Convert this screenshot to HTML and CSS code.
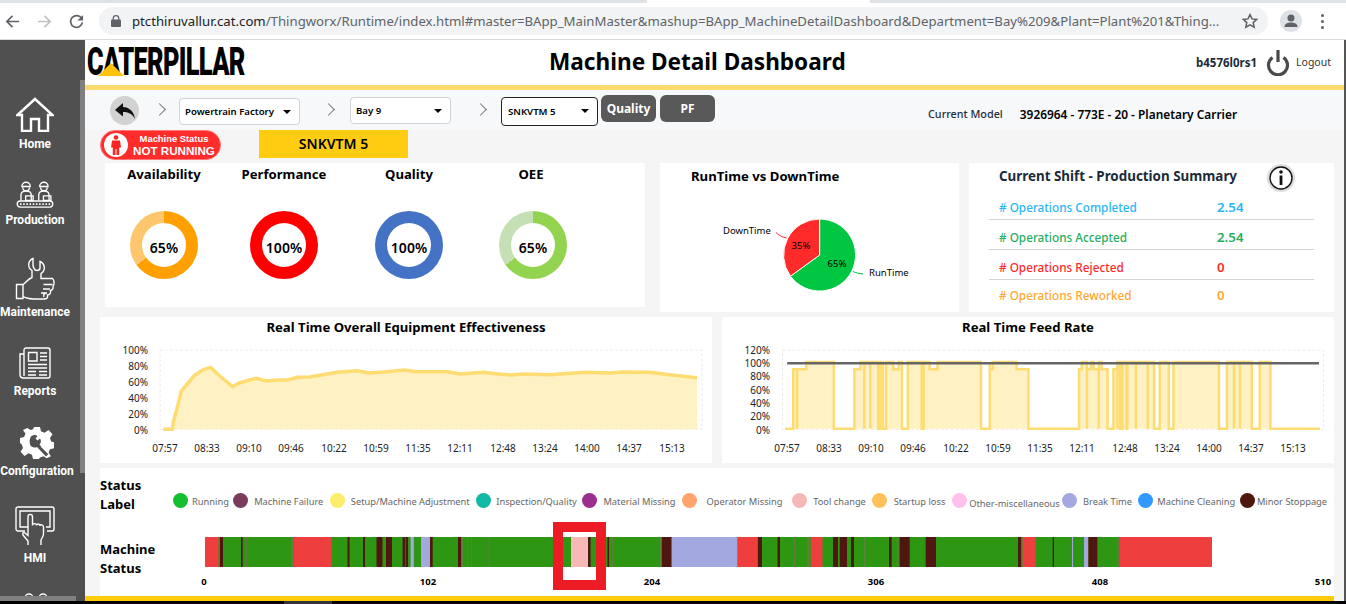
FILE: index.html
```html
<!DOCTYPE html>
<html lang="en">
<head>
    <meta charset="UTF-8">
    <title>Machine Detail Dashboard</title>
    <link rel="stylesheet" href="styles.css">
</head>
<body>
    <div class="browser-bar">
        <div class="tab-strip"><span class="tab-active"></span></div>
        <div class="browser-tools">
            <svg class="nav-icon" viewBox="0 0 16 16"><path d="M15 8H2M8 2 2 8l6 6" fill="none" stroke="#5f6368" stroke-width="1.8"/></svg>
            <svg class="nav-icon" viewBox="0 0 16 16"><path d="M1 8h13M8 2l6 6-6 6" fill="none" stroke="#bdc1c6" stroke-width="1.8"/></svg>
            <svg class="nav-icon" viewBox="0 0 16 16"><path d="M13.6 5A6.3 6.3 0 1 0 14.3 9" fill="none" stroke="#5f6368" stroke-width="1.8"/><path d="M15 1v6H9z" fill="#5f6368"/></svg>
            <div class="omnibox">
                <svg class="lock" viewBox="0 0 10 12"><path d="M2.2 5V3.4a2.8 2.8 0 0 1 5.6 0V5" fill="none" stroke="#5f6368" stroke-width="1.2"/><rect y="4.6" width="10" height="7.4" rx="1" fill="#5f6368"/></svg>
                <span class="url"><b>ptcthiruvallur.cat.com</b>/Thingworx/Runtime/index.html#master=BApp_MainMaster&amp;mashup=BApp_MachineDetailDashboard&amp;Department=Bay%209&amp;Plant=Plant%201&amp;Thing...</span>
                <svg class="star" viewBox="0 0 16 16"><path d="M8 1.6l2 4.3 4.7.5-3.5 3.2 1 4.6L8 11.9l-4.2 2.3 1-4.6L1.300 6.400 6 5.900z" fill="none" stroke="#5f6368" stroke-width="1.5"/></svg>
            </div>
            <div class="avatar">
                <svg viewBox="0 0 22 22"><circle cx="11" cy="8" r="3.500" fill="#5f6368"/><path d="M4.500 17c0-3.500 3.500-4.500 6.500-4.500s6.500 1 6.500 4.500z" fill="#5f6368"/></svg>
            </div>
            <div class="dots"><i></i><i></i><i></i></div>
        </div>
    </div>

    <div class="app">
        <nav class="sidebar">
            <a class="nav-item">
                <svg width="38" height="35" viewBox="0 0 38 35"><path d="M1.500 18 19 2l17.500 16H32v16h-9V22h-8v12H6V18z" class="line-icon"/></svg>
                <span>Home</span>
            </a>
            <a class="nav-item">
                <svg width="40" height="29" viewBox="0 0 40 31">
                    <g class="thin-icon">
                        <path d="M6 8a4.500 4.500 0 0 1 9 0zM25 8a4.500 4.500 0 0 1 9 0zM7 9a3.500 3.500 0 0 0 7 0M26 9a3.500 3.500 0 0 0 7 0"/>
                        <path d="M5 23v-6c0-3 2-4 5.500-4s5.500 1 5.500 4v6M24 23v-6c0-3 2-4 5.500-4s5.500 1 5.500 4v6"/>
                        <path d="M10 18h8v5h-8zM29 18h8v5h-8z"/>
                        <rect x="1" y="23.500" width="38" height="6.500" rx="3.200"/>
                    </g>
                    <path d="M4 26.800h33" stroke="#fff" stroke-width="2" stroke-dasharray="1.600 1.800"/>
                </svg>
                <span>Production</span>
            </a>
            <a class="nav-item nav-nudge">
                <svg width="40" height="44" viewBox="0 0 40 44"><path d="M18 2.500c-5 2-6 9-1 12v7c-4 1.500-6 5-9 7H1.500v14H8v-2c5 3 10 2.500 21 2.500 3 0 4-1.500 3.500-4 2.500 0 3.500-2 3-4.500 2.500-.5 3-3 2.500-4.500 1.500-1 1.500-6-.5-7.500H26v-5c5-3 4-10-1-12v6.500c0 1.500-1.500 2.500-3.500 2.500S18 10.500 18 9zM8 28.500v13M29 41c-1-2 0-4 3-4h-6M35 33h-7M37.500 28.500h-9" class="thin-icon"/></svg>
                <span>Maintenance</span>
            </a>
            <a class="nav-item">
                <svg width="32" height="32" viewBox="0 0 32 32"><g class="thin-icon"><path d="M5 3.500c0-1.500.8-2.500 2-2.500h22c1.200 0 2 1 2 2.500V29c0 1.500-1 2-2 2H4.500C2.500 31 1 29.500 1 27.500V7h4zM5 7v22"/><path d="M9.500 5.500h8.500v8.500H9.500zM21 6h7M21 9.500h7M21 13h7M9 17.500h19M9 21h19M9 24.500h8M20 24.500h8M9 28h8M20 28h8"/></g></svg>
                <span>Reports</span>
            </a>
            <a class="nav-item nav-nudge nav-config">
                <svg width="34" height="32" viewBox="0 0 34 32"><path d="M14 0h6l1 4.200 3.500 1.500L28.500 3l4 4.300-2.500 3.800 1.200 3.400 2.800.8v6l-4 1-1.500 3.300 2.400 3.600-4.100 2-3.300-2-3.500 1.300L19 32h-6l-1-4.200-3.500-1.500L4.500 29l-4-4.300L3 21l-1.200-3.400L0 16v-5l4-1 1.500-3.300L3 3.100 7.300 1l3.300 2 2.400-.8z" fill="#fff"/><path d="M11 9.500c2-2 5-2 6.500-.5l-2 2.500 2 2 2.500-2c1.500 2 1 4.500-.5 6l9 9.500-2.500 2.500-9-9.500c-2 1-4.500.5-6-1-1.500-2-2-6 0-9.500z" fill="#505050"/><path d="M21 19l7.500 7.500" stroke="#fff" stroke-width="1.200"/></svg>
                <span>Configuration</span>
            </a>
            <a class="nav-item">
                <svg width="40" height="40" viewBox="0 0 40 40"><g class="thin-icon"><path d="M10 25H3c-1.300 0-2-1-2-2V3c0-1.200.7-2 2-2h34c1.300 0 2 .8 2 2v20c0 1-.7 2-2 2h-5M13 21H5V5h30v16h-4"/><path d="M13 39v-4l-5-6c-1-2 .5-3 2-2l3 2.500V11c0-3.500 4.500-3.500 4.500 0v8.500c0-2.500 4-2.500 4 0 0-2 3.500-2 3.500.5 0-2 3.500-1.500 3.500 1v7c0 2-1.500 4-2.500 6v5"/></g></svg>
                <span>HMI</span>
            </a>
            <a class="nav-item">
                <svg width="40" height="40" viewBox="0 0 40 40"><g class="thin-icon"><circle cx="14" cy="5" r="4"/><circle cx="28" cy="5" r="4"/></g></svg>
            </a>
            <div class="side-thumb"></div>
            <div class="side-hscroll"></div>
        </nav>

        <div class="content">
            <header class="top-header">
                <div class="logo"><span class="logo-text">CATERPILLAR</span><span class="logo-tri"></span></div>
                <h1>Machine Detail Dashboard</h1>
                <div class="user-box">
                    <span class="user-name">b4576l0rs1</span>
                    <svg width="24" height="26" viewBox="0 0 24 26"><path d="M6.500 7.500a9.500 9.500 0 1 0 11 0" fill="none" stroke="#4a4a4a" stroke-width="3.200"/><path d="M12 0v12" stroke="#4a4a4a" stroke-width="3.200"/></svg>
                    <span class="logout">Logout</span>
                </div>
            </header>

            <div class="filter-bar">
                <button class="back-btn">
                    <svg width="22" height="18" viewBox="0 0 22 18"><path d="M9 1 1 8l8 6.500V10c5 0 9 1.500 12 7-1-7-5-11.500-12-12z" fill="#111"/></svg>
                </button>
                <span class="chev chev-first"></span>
                <div class="picker picker-plant">Powertrain Factory</div>
                <span class="chev chev-mid"></span>
                <div class="picker picker-bay">Bay 9</div>
                <span class="chev chev-last"></span>
                <div class="picker picker-machine">SNKVTM 5</div>
                <button class="dark-btn">Quality</button>
                <button class="dark-btn">PF</button>
                <span class="model-label">Current Model</span>
                <span class="model-value">3926964 - 773E - 20 - Planetary Carrier</span>
            </div>

            <div class="status-row">
                <div class="status-pill">
                    <span class="status-person">
                        <svg width="12" height="20" viewBox="0 0 12 20"><circle cx="6" cy="2.500" r="2.300" fill="#f22"/><path d="M2 5.500h8l1 7H9.200V20H6.500v-6h-1v6H2.800v-7.500H1z" fill="#f22"/></svg>
                    </span>
                    <span class="status-text"><small>Machine Status</small><b>NOT RUNNING</b></span>
                </div>
                <div class="machine-name">SNKVTM 5</div>
            </div>

            <div class="row-kpi">
                <section class="card kpi-card">
                    <div class="kpi">
                        <h4>Availability</h4>
                        <div class="donut donut-orange"><span>65%</span></div>
                    </div>
                    <div class="kpi">
                        <h4>Performance</h4>
                        <div class="donut donut-red"><span>100%</span></div>
                    </div>
                    <div class="kpi">
                        <h4>Quality</h4>
                        <div class="donut donut-blue"><span>100%</span></div>
                    </div>
                    <div class="kpi kpi-oee">
                        <h4>OEE</h4>
                        <div class="donut donut-green"><span>65%</span></div>
                    </div>
                </section>

                <section class="card pie-card">
                    <h4>RunTime vs DownTime</h4>
                    <svg class="pie" width="299" height="120" viewBox="0 29 299 120">
                        <path d="M159.600 92V56A36 36 0 1 1 130.500 113.200z" fill="#00c642" stroke="#fff"/>
                        <path d="M159.600 92 130.500 113.200A36 36 0 0 1 159.600 56z" fill="#ff2a2a" stroke="#fff"/>
                        <path d="M116 69.500c3 3 6 4.500 10.500 5.500" fill="none" stroke="#ff2a2a"/>
                        <path d="M193 108.500c3 1.500 6 2 10 2.500" fill="none" stroke="#00c642"/>
                        <text x="63" y="71">DownTime</text>
                        <text x="209" y="112.500">RunTime</text>
                        <text x="141" y="85.500" text-anchor="middle" class="pie-pct">35%</text>
                        <text x="177" y="103.500" text-anchor="middle" class="pie-pct">65%</text>
                    </svg>
                </section>

                <section class="card shift-card">
                    <div class="shift-head">
                        <h4>Current Shift - Production Summary</h4>
                        <svg class="info" width="28" height="28" viewBox="0 0 28 28"><circle cx="14" cy="14" r="14" fill="#ddd"/><circle cx="14" cy="14" r="11" fill="#fff" stroke="#111" stroke-width="1.400"/><circle cx="14" cy="8" r="1.800" fill="#111"/><path d="M14 11.500V21" stroke="#111" stroke-width="2.800"/></svg>
                    </div>
                    <div class="shift-row text-blue"><span># Operations Completed</span><b>2.54</b></div>
                    <div class="shift-row text-green"><span># Operations Accepted</span><b>2.54</b></div>
                    <div class="shift-row text-red"><span># Operations Rejected</span><b>0</b></div>
                    <div class="shift-row text-orange"><span># Operations Reworked</span><b>0</b></div>
                </section>
            </div>

            <div class="row-charts">
                <section class="card chart-card">
                    <h4>Real Time Overall Equipment Effectiveness</h4>
                    <svg class="chart" width="612" height="126" viewBox="0 20 612 126">
                        <rect class="plot-frame" x="60.100" y="33" width="541.700" height="79.300"/>
                        <path class="area-fill" d="M63.300 112.300H72.400L73.500 104 77.100 91.300 81.100 74.700 85 69.700 94.900 58 102.800 53 110.700 50.300 118.600 58 132.500 69.700 138.400 66.300 146.300 64 156.200 61.300 166.100 64 177.900 63 187.800 63 197.700 60.300 209.600 60 221.400 58 237.200 55.300 257 53.700 268.900 56 284.700 55 304.500 53 316.300 54.700 348 54.700 359.800 57 383.600 55.300 395.400 56.700 411.200 58 423.100 57 450.800 57.700 462.600 56.700 486.400 55.300 510.100 56 521.900 55 549.600 55.300 569.400 57.700 597.100 60.700V112.300z"/>
                        <path class="area-line" d="M63.300 112.300H72.400L73.500 104 77.100 91.300 81.100 74.700 85 69.700 94.900 58 102.800 53 110.700 50.300 118.600 58 132.500 69.700 138.400 66.300 146.300 64 156.200 61.300 166.100 64 177.900 63 187.800 63 197.700 60.300 209.600 60 221.400 58 237.200 55.300 257 53.700 268.900 56 284.700 55 304.500 53 316.300 54.700 348 54.700 359.800 57 383.600 55.300 395.400 56.700 411.200 58 423.100 57 450.800 57.700 462.600 56.700 486.400 55.300 510.100 56 521.900 55 549.600 55.300 569.400 57.700 597.100 60.700"/>
                        <text class="y-tick" x="48" y="36.500">100%</text>
                        <text class="y-tick" x="48" y="52.500">80%</text>
                        <text class="y-tick" x="48" y="68.500">60%</text>
                        <text class="y-tick" x="48" y="84.500">40%</text>
                        <text class="y-tick" x="48" y="100.500">20%</text>
                        <text class="y-tick" x="48" y="116.500">0%</text>
                        <g class="x-ticks">
                            <text x="65" y="134.500">07:57</text><text x="107" y="134.500">08:33</text><text x="149" y="134.500">09:10</text><text x="191" y="134.500">09:46</text><text x="234" y="134.500">10:22</text><text x="276" y="134.500">10:59</text><text x="318" y="134.500">11:35</text><text x="360" y="134.500">12:11</text><text x="403" y="134.500">12:48</text><text x="445" y="134.500">13:24</text><text x="487" y="134.500">14:00</text><text x="529" y="134.500">14:37</text><text x="572" y="134.500">15:13</text>
                        </g>
                    </svg>
                </section>

                <section class="card chart-card">
                    <h4>Real Time Feed Rate</h4>
                    <svg class="chart" width="612" height="126" viewBox="0 20 612 126">
                        <rect class="plot-frame" x="60.500" y="33" width="541" height="79.300"/>
                        <path class="area-fill area-step" d="M63 111.700H71.200V52.300H75.100V111.700V52.300H84.200V45H111.900V111.700H132.400V52.300H138.400V45H142.300V111.700V45H148.300V111.700V45H156.200V111.700H158.100V45H160.900V111.700H164.100V45H171.200V52.300H176.700V45H179.900V111.700H185.800V45H199.700V111.700H201.600V45H207.600V52.300H215.500V45H259V111.700H267.700V45V52.300H270.800V45H294.600V52.300H306.400V111.700H357V52.300H359.800V45H364.900V111.700V52.300H368.900V45H371.700V52.300H376.800V111.700V45H379.600V52.300H385.500V111.700H391.400V52.300H395.400V111.700V45H398.100V111.700H400.500V45H404.500V111.700H405.300V45H413.900V111.700V45H425.800V111.700V45H432.100V111.700H437.700V45H446.800V111.700H451.500V45H497V111.700H504.900V45H512V111.700V45H518V111.700V45H529.800V111.700H537.700V45H548.400V111.700H598"/>
                        <path class="target-line" d="M65.200 46.300H597"/>
                        <text class="y-tick" x="48" y="36.500">120%</text>
                        <text class="y-tick" x="48" y="49.800">100%</text>
                        <text class="y-tick" x="48" y="63.100">80%</text>
                        <text class="y-tick" x="48" y="76.500">60%</text>
                        <text class="y-tick" x="48" y="89.800">40%</text>
                        <text class="y-tick" x="48" y="103.100">20%</text>
                        <text class="y-tick" x="48" y="116.500">0%</text>
                        <g class="x-ticks">
                            <text x="65" y="134.500">07:57</text><text x="107" y="134.500">08:33</text><text x="149" y="134.500">09:10</text><text x="191" y="134.500">09:46</text><text x="234" y="134.500">10:22</text><text x="276" y="134.500">10:59</text><text x="318" y="134.500">11:35</text><text x="360" y="134.500">12:11</text><text x="403" y="134.500">12:48</text><text x="445" y="134.500">13:24</text><text x="487" y="134.500">14:00</text><text x="529" y="134.500">14:37</text><text x="571" y="134.500">15:13</text>
                        </g>
                    </svg>
                </section>
            </div>

            <section class="card status-card">
                <div class="side-label">Status<br>Label</div>
                <div class="legend">
                    <div class="legend-item"><i class="dot-running"></i><span>Running</span></div>
                    <div class="legend-item"><i class="dot-failure"></i><span>Machine Failure</span></div>
                    <div class="legend-item"><i class="dot-setup"></i><span>Setup/Machine Adjustment</span></div>
                    <div class="legend-item"><i class="dot-inspect"></i><span>Inspection/Quality</span></div>
                    <div class="legend-item"><i class="dot-material"></i><span>Material Missing</span></div>
                    <div class="legend-item"><i class="dot-operator"></i><span>Operator Missing</span></div>
                    <div class="legend-item"><i class="dot-tool"></i><span>Tool change</span></div>
                    <div class="legend-item"><i class="dot-startup"></i><span>Startup loss</span></div>
                    <div class="legend-item legend-low"><i class="dot-other"></i><span>Other-miscellaneous</span></div>
                    <div class="legend-item"><i class="dot-break"></i><span>Break Time</span></div>
                    <div class="legend-item"><i class="dot-clean"></i><span>Machine Cleaning</span></div>
                    <div class="legend-item"><i class="dot-minor"></i><span>Minor Stoppage</span></div>
                </div>
                <div class="side-label side-label-low">Machine<br>Status</div>
                <svg class="timeline" width="1134" height="60" viewBox="200 530 1134 60">
                    <rect x="205" y="537" width="1007" height="30" fill="#2d9612"/>
                    <path class="seg seg-red" d="M205 552H218.600M293.700 552H331.500M737.300 552H757.400M810.800 552H822.500M1022.500 552H1035.800M1119.800 552H1212"/>
                    <path class="seg seg-lav" d="M410.600 552H413.800M421 552H430M671.400 552H737.300M1072 552H1073M1084 552H1088.400"/>
                    <path class="seg seg-pink" d="M571 552H588"/>
                    <path class="seg seg-dark" d="M219.800 552H223M241 552H242.700M347.500 552H349.500M363 552H365M376.500 552H382.500M386 552H392M402.600 552H405.400M406 552H408M430 552H432.700M458 552H461M588 552H590.600M607.500 552H609M661.700 552H671.400M758 552H762M777.500 552H780M833 552H838M839.700 552H847M851 552H854M889 552H891.600M899.600 552H909.700M925.700 552H936M1018 552H1021.300M1052.700 552H1054M1088.400 552H1097.300"/>
                    <path class="seg seg-olive" d="M218.800 552H219.800M246 552H247M291 552H293.700M462 552H463M467 552H468M471 552H472M488.500 552H489.500M604 552H605M612 552H613M660 552H661.500M794 552H795M807 552H810M864 552H866M897 552H898.500M1021.300 552H1022.500M1117.500 552H1119.800"/>
                    <g class="time-ticks">
                        <text x="204" y="585">0</text><text x="428" y="585">102</text><text x="652" y="585">204</text><text x="876" y="585">306</text><text x="1100" y="585">408</text><text x="1323" y="585">510</text>
                    </g>
                </svg>
                <div class="highlight-box"></div>
            </section>

            <div class="footer-line"></div>
        </div>
    </div>
    <div class="taskbar"><span></span></div>
</body>
</html>
```

FILE: styles.css
```css
* {
    box-sizing: border-box;
}
html, body {
    margin: 0;
    height: 604px;
    overflow: hidden;
}
body {
    font-family: "Noto Sans", sans-serif;
    color: #000;
    background: #fff;
    position: relative;
}
h1, h4 {
    margin: 0;
}

/* browser chrome */
.browser-bar {
    height: 40px;
    border-bottom: 1px solid #d9dadc;
}
.tab-strip {
    height: 3px;
    background: #dee1e6;
    position: relative;
}
.tab-active {
    position: absolute;
    left: 647px;
    top: 0;
    width: 223px;
    height: 3px;
    background: #fff;
}
.browser-tools {
    height: 36px;
    display: flex;
    align-items: center;
    padding-left: 5px;
}
.nav-icon {
    width: 15px;
    height: 15px;
    margin-right: 17px;
}
.omnibox {
    width: 1169px;
    height: 28px;
    margin-left: -2px;
    background: #f1f3f4;
    border-radius: 14px;
    display: flex;
    align-items: center;
    padding-left: 12px;
    flex: none;
}
.lock {
    width: 10px;
    height: 12px;
    flex: none;
}
.url {
    width: 1100px;
    flex: none;
    margin-left: 11px;
    font-family: "Noto Sans", sans-serif;
    font-size: 13.2px;
    color: #5f6368;
    white-space: nowrap;
}
.url b {
    font-weight: 400;
    color: #202124;
}
.star {
    width: 16px;
    height: 16px;
    margin-left: 10px;
    flex: none;
}
.avatar {
    width: 22px;
    height: 22px;
    margin-left: 12px;
    border-radius: 50%;
    background: #dee1e6;
    flex: none;
}
.avatar svg {
    display: block;
}
.dots {
    margin-left: 19px;
    display: flex;
    flex-direction: column;
    gap: 3px;
}
.dots i {
    width: 3px;
    height: 3px;
    border-radius: 50%;
    background: #5f6368;
}

/* page */
.app {
    display: flex;
    height: 561px;
    border-right: 2px solid #555;
}
.sidebar {
    width: 85px;
    flex: none;
    background: #505050;
    position: relative;
    overflow: hidden;
    display: flex;
    flex-direction: column;
    gap: 28px;
    padding: 57px 15px 0 0;
}
.side-thumb {
    position: absolute;
    right: 0;
    top: 40px;
    width: 5px;
    height: 393px;
    background: #808080;
}
.side-hscroll {
    position: absolute;
    left: 0;
    bottom: 0;
    width: 76px;
    height: 5px;
    background: #808080;
}
.nav-item {
    display: flex;
    flex-direction: column;
    align-items: center;
    gap: 5px;
    color: #fff;
    font-family: "Roboto", sans-serif;
    font-size: 12px;
    font-weight: 700;
    line-height: 14px;
    white-space: nowrap;
    flex: none;
}
.nav-nudge {
    margin-top: 1px;
}
.nav-config {
    margin-left: 4px;
}
.nav-item svg {
    display: block;
    flex: none;
}
.line-icon {
    fill: none;
    stroke: #fff;
    stroke-width: 2.4;
}
.thin-icon {
    fill: none;
    stroke: #fff;
    stroke-width: 1.400;
}
.content {
    flex: 1;
    background: #f5f5f5;
    min-width: 0;
    display: flex;
    flex-direction: column;
}

/* header */
.top-header {
    height: 50px;
    background: #fff;
    border-bottom: 5px solid #fbdb6f;
    display: flex;
    align-items: center;
    position: relative;
    flex: none;
}
.logo {
    width: 160px;
    margin-left: 2px;
    position: relative;
    height: 27px;
    margin-top: -1px;
}
.logo-text {
    display: block;
    font-family: "Roboto", sans-serif;
    font-weight: 900;
    font-size: 38px;
    line-height: 27px;
    letter-spacing: -1px;
    color: #000;
    transform: scaleX(0.668);
    transform-origin: left center;
    white-space: nowrap;
}
.logo-tri {
    position: absolute;
    left: 11px;
    bottom: 0;
    border-left: 13.500px solid transparent;
    border-right: 13.500px solid transparent;
    border-bottom: 13px solid #ffc20e;
}
h1 {
    position: absolute;
    left: 464px;
    top: 6px;
    font-size: 22.6px;
    line-height: 32px;
    font-weight: 700;
    white-space: nowrap;
}
.user-box {
    margin-left: auto;
    display: flex;
    align-items: center;
    margin-right: 13px;
}
.user-name {
    font-size: 11.500px;
    font-weight: 700;
    color: #1c2b39;
}
.user-box svg {
    margin: 0 6px 0 9px;
}
.logout {
    font-size: 10.500px;
    color: #333;
    margin-top: -2px;
}

/* filters */
.filter-bar {
    height: 40px;
    background: #f7f8fa;
    display: flex;
    align-items: flex-start;
    flex: none;
    font-size: 9.600px;
    font-weight: 600;
}
.back-btn {
    width: 29px;
    height: 29px;
    margin: 6px 0 0 25px;
    padding: 0;
    border: none;
    border-radius: 50%;
    background: #d2d2d2;
    display: flex;
    align-items: center;
    justify-content: center;
}
.chev {
    width: 9px;
    height: 9px;
    margin-top: 15px;
    border-top: 1px solid #777;
    border-right: 1px solid #777;
    transform: rotate(45deg);
}
.chev-first {
    margin-left: 16px;
    margin-right: 15px;
}
.chev-mid {
    margin-left: 24px;
    margin-right: 17px;
}
.chev-last {
    margin-left: 25px;
    margin-right: 16px;
}
.picker {
    height: 27px;
    margin-top: 8px;
    background: #fff;
    border: 1px solid #cfd2d6;
    border-radius: 4px;
    padding-left: 5px;
    display: flex;
    align-items: center;
    position: relative;
    white-space: nowrap;
}
.picker::after {
    content: "";
    position: absolute;
    right: 8px;
    top: 11px;
    border-left: 4px solid transparent;
    border-right: 4px solid transparent;
    border-top: 4px solid #000;
}
.picker-plant {
    width: 121px;
}
.picker-bay {
    width: 101px;
    margin-top: 7px;
}
.picker-machine {
    width: 97px;
    height: 29px;
    margin-top: 7px;
    border: 1px solid #222;
    padding-left: 6px;
}
.dark-btn {
    width: 55px;
    height: 27px;
    margin: 5px 0 0 3px;
    border: none;
    border-radius: 6px;
    background: #595959;
    color: #fff;
    font-family: inherit;
    font-size: 12px;
    font-weight: 700;
    padding: 0;
}
.dark-btn + .dark-btn {
    margin-left: 4px;
}
.model-label {
    margin: 16px 0 0 213px;
    font-size: 10.800px;
    font-weight: 500;
    line-height: 16px;
    color: #1c2b39;
    white-space: nowrap;
}
.model-value {
    margin: 16px 0 0 17px;
    font-size: 11.900px;
    font-weight: 600;
    line-height: 17px;
    white-space: nowrap;
}

/* status */
.status-row {
    height: 33px;
    flex: none;
    display: flex;
    align-items: flex-start;
    padding-left: 15px;
}
.status-pill {
    width: 121px;
    height: 30px;
    background: #ff2c2c;
    border: 1px solid #f77;
    border-radius: 15px;
    display: flex;
    align-items: center;
    padding-left: 3px;
    color: #fff;
}
.status-person {
    width: 24px;
    height: 24px;
    border-radius: 50%;
    background: #fff;
    display: flex;
    align-items: center;
    justify-content: center;
    flex: none;
}
.status-text {
    display: flex;
    flex-direction: column;
    align-items: center;
    flex: 1;
    font-family: "Liberation Sans", sans-serif;
    white-space: nowrap;
}
.status-text small {
    font-size: 9.400px;
    font-weight: 700;
    line-height: 11px;
}
.status-text b {
    font-size: 11.600px;
    line-height: 13px;
}
.machine-name {
    width: 149px;
    height: 28px;
    margin-left: 38px;
    background: #ffcc12;
    text-align: center;
    font-size: 14px;
    font-weight: 600;
    line-height: 28px;
}

/* cards */
.card {
    background: #fff;
}
.card h4 {
    font-size: 13.150px;
    font-weight: 700;
    line-height: 20px;
    white-space: nowrap;
}
.row-kpi {
    display: flex;
    align-items: flex-start;
    padding-left: 20px;
    flex: none;
}
.kpi-card {
    width: 540px;
    height: 144px;
    display: grid;
    grid-template-columns: 118px 122px 128px 120px;
}
.kpi {
    display: flex;
    flex-direction: column;
    align-items: center;
    padding-top: 1px;
}
.kpi-oee h4 {
    margin-right: 4px;
}
.donut {
    width: 68px;
    height: 68px;
    margin-top: 27px;
    border-radius: 50%;
    display: flex;
    align-items: center;
    justify-content: center;
}
.donut span {
    width: 44px;
    height: 44px;
    border-radius: 50%;
    background: #fff;
    font-size: 14px;
    font-weight: 600;
    line-height: 49px;
    text-align: center;
    white-space: nowrap;
}
.donut-orange {
    background: conic-gradient(#ff9f00 65%, #ffc76d 0);
}
.donut-red {
    background: #ff0000;
}
.donut-blue {
    background: #4472c4;
}
.donut-green {
    background: conic-gradient(#92d450 65%, #c5e0b4 0);
}
.pie-card {
    width: 299px;
    height: 149px;
    margin-left: 15px;
    overflow: hidden;
}
.pie-card h4 {
    padding: 3px 0 0 31px;
    line-height: 20px;
    height: 29px;
}
.pie {
    display: block;
}
.pie text {
    font-size: 9.500px;
    font-family: "Noto Sans", sans-serif;
}
.shift-card {
    width: 365px;
    height: 149px;
    margin-left: 10px;
    padding: 0 20px;
}
.shift-head {
    height: 27px;
    position: relative;
}
.shift-card h4 {
    padding: 3px 0 0 10px;
    color: #1c2b39;
    font-size: 13.400px;
}
.info {
    position: absolute;
    right: 19px;
    top: 1px;
}
.shift-row {
    height: 30px;
    display: flex;
    align-items: center;
    padding: 5px 0 0 10px;
    border-bottom: 1px solid #d4d4d4;
    font-size: 11.750px;
    font-weight: 500;
}
.shift-row:last-child {
    border-bottom: none;
    padding-top: 0;
}
.shift-row span {
    width: 218px;
}
.shift-row b {
    font-size: 13.300px;
    font-weight: 600;
}
.text-blue {
    color: #29b6f6;
}
.text-green {
    color: #27ae60;
}
.text-red {
    color: #ff2a2a;
}
.text-orange {
    color: #ffa733;
}
.row-charts {
    display: flex;
    gap: 10px;
    padding-left: 15px;
    margin-top: 5px;
    flex: none;
}
.chart-card {
    width: 612px;
    height: 146px;
}
.chart-card h4 {
    text-align: center;
}
.chart {
    display: block;
}
.chart text {
    font-size: 10px;
    fill: #222;
}
.plot-frame {
    fill: none;
    stroke: #ececec;
    stroke-dasharray: 3 2;
}
.area-fill {
    fill: #fef1c3;
}
.area-line {
    fill: none;
    stroke: #fddc72;
    stroke-width: 3.500;
    stroke-linejoin: round;
}
.area-step {
    stroke: #fddc72;
    stroke-width: 2.500;
}
.target-line {
    stroke: #666;
    stroke-width: 2.500;
}
.y-tick {
    text-anchor: end;
}
.x-ticks text, .time-ticks text {
    text-anchor: middle;
}

/* bottom status strip */
.status-card {
    width: 1234px;
    height: 128px;
    margin: 5px 0 0 15px;
    flex: none;
    position: relative;
    display: grid;
    grid-template-columns: 73px 1fr;
    grid-template-rows: 62px 66px;
}
.side-label {
    font-size: 13px;
    font-weight: 700;
    line-height: 19px;
    padding-top: 8px;
}
.side-label-low {
    padding-top: 10px;
}
.legend {
    display: grid;
    grid-template-columns: 60px 96.500px 146.500px 106px 100px 110px 80px 80px 110px 76px 101.500px 90px;
    padding-top: 25px;
    align-items: start;
}
.legend-item {
    display: flex;
    align-items: flex-start;
    font-size: 9.300px;
    line-height: 15px;
    color: #666;
    white-space: nowrap;
}
.legend-item i {
    width: 15px;
    height: 15px;
    border-radius: 50%;
    flex: none;
}
.legend-item span {
    flex: 1;
    text-align: center;
    padding-top: 1px;
}
.legend-low span {
    padding-top: 3px;
}
.dot-running { background: #14bf30; }
.dot-failure { background: #7b3b5c; }
.dot-setup { background: #fbee6b; }
.dot-inspect { background: #12b8a6; }
.dot-material { background: #9b2f8f; }
.dot-operator { background: #ffa46c; }
.dot-tool { background: #f8b8b8; }
.dot-startup { background: #ffc15c; }
.dot-other { background: #ffc0ee; }
.dot-break { background: #a3a8e0; }
.dot-clean { background: #3399ff; }
.dot-minor { background: #4f1710; }
.timeline {
    display: block;
    margin: 0 0 0 27px;
    overflow: visible;
}
.seg {
    fill: none;
    stroke-width: 30;
}
.seg-red { stroke: #ee3e3e; }
.seg-lav { stroke: #a3a8e0; }
.seg-pink { stroke: #f8b8b8; }
.seg-dark { stroke: #4f1710; }
.seg-olive { stroke: #5f7f3a; }
.time-ticks text {
    font-size: 9.500px;
    font-weight: 700;
}
.highlight-box {
    position: absolute;
    left: 453px;
    top: 54px;
    width: 53px;
    height: 68px;
    border: 10px solid #ed1c24;
}
.footer-line {
    height: 5px;
    width: 1249px;
    background: #ffcc0d;
    flex: none;
}
.taskbar {
    height: 3px;
    background: #000;
    padding-left: 284px;
}
.taskbar span {
    display: block;
    width: 48px;
    height: 3px;
    background: #333;
}
```
